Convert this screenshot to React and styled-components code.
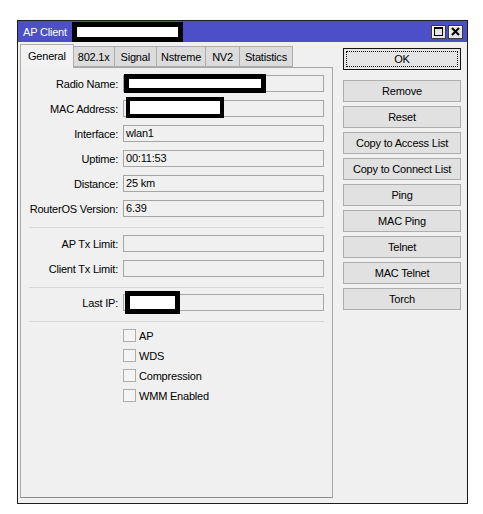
import React from 'react';
import styled, { createGlobalStyle } from 'styled-components';

const GlobalStyle = createGlobalStyle`
  body {
    margin: 0;
    background: #ffffff;
    font-family: "Liberation Sans", Arial, sans-serif;
    font-size: 11px;
    letter-spacing: -0.2px;
    color: #000;
  }
`

const Page = styled.div`
  padding: 20px 0 0 17px;
`

const Window = styled.div`
  width: 451px;
  height: 484px;
  box-sizing: border-box;
  border: 1px solid #1c1c1c;
  background: #f0f0f0;
  display: flex;
  flex-direction: column;
`

const TitleBar = styled.div`
  height: 21px;
  flex-shrink: 0;
  display: flex;
  align-items: center;
  padding: 0 4px 0 5px;
  background: #4c4fc8;
  color: #fff;
  font-size: 11px;
`

const TitleRedact = styled.span`
  display: inline-block;
  width: 111px;
  height: 20px;
  box-sizing: border-box;
  border: 5px solid #000;
  background: #fff;
  margin-left: 5px;
  align-self: flex-end;
`

const TitleButtons = styled.div`
  display: flex;
  gap: 2px;
  margin-left: auto;
`

const TitleButton = styled.div`
  width: 15px;
  height: 14px;
  box-sizing: border-box;
  border: 1px solid #3a3a3a;
  box-shadow: inset 1px 1px 0 #ffffff;
  background: #e6e6e6;
  display: flex;
  align-items: center;
  justify-content: center;
`

const Body = styled.div`
  flex: 1;
  display: flex;
  padding: 1px 0 5px 2px;
  min-height: 0;
`

const TabArea = styled.div`
  width: 313px;
  display: flex;
  flex-direction: column;
`

const TabStrip = styled.div`
  height: 24px;
  flex-shrink: 0;
  display: flex;
  align-items: flex-end;
`

const Tab = styled.div`
  position: relative;
  z-index: ${p => (p.$active ? 1 : 0)};
  height: ${p => (p.$active ? '24px' : '21px')};
  margin-bottom: ${p => (p.$active ? '-1px' : '0')};
  box-sizing: border-box;
  padding: 0 ${p => p.$pad}px;
  display: flex;
  align-items: center;
  border: 1px solid #adadad;
  border-bottom: ${p => (p.$active ? 'none' : '1px solid #adadad')};
  margin-left: ${p => (p.$first ? '0' : '-1px')};
  background: ${p => (p.$active ? '#f2f2f2' : '#dcdcdc')};
  padding-bottom: ${p => (p.$active ? '2px' : '0')};
  white-space: nowrap;
`

const Panel = styled.div`
  flex: 1;
  box-sizing: border-box;
  border: 1px solid #a8a8a8;
  border-bottom-color: #8c8c8c;
  background: #f0f0f0;
  padding-top: 7px;
`

const FormGrid = styled.div`
  display: grid;
  grid-template-columns: 97px 201px;
  column-gap: 5px;
  row-gap: 8px;
  align-items: center;
`

const Label = styled.div`
  text-align: right;
  white-space: nowrap;
`

const Field = styled.div`
  position: relative;
  height: 17px;
  box-sizing: border-box;
  border: 1px solid #a6a6a6;
  background: #f0f0f0;
  padding-left: 2px;
  line-height: 15px;
`

// black-framed blanking box laid over a field value
const Redact = styled.div`
  position: absolute;
  left: ${p => p.$left}px;
  top: ${p => p.$top}px;
  width: ${p => p.$w}px;
  height: ${p => p.$h}px;
  box-sizing: border-box;
  border: ${p => p.$edge || 5}px solid #000;
  background: #fff;
`

const Separator = styled.div`
  height: 1px;
  background: #d8d8d8;
  margin: ${p => p.$top || 10}px 8px ${p => p.$bottom || 7}px;
`

const CheckList = styled.div`
  display: flex;
  flex-direction: column;
  gap: 7px;
  padding-left: 102px;
`

const CheckRow = styled.div`
  display: flex;
  align-items: center;
  gap: 3px;
  height: 13px;
`

const CheckBox = styled.span`
  width: 13px;
  height: 13px;
  box-sizing: border-box;
  border: 1px solid #adadad;
  background: #f4f4f4;
`

const ButtonColumn = styled.div`
  width: 118px;
  margin-left: 10px;
  padding-top: 5px;
  display: flex;
  flex-direction: column;
  gap: 4px;
`

const Button = styled.div`
  position: relative;
  height: 22px;
  box-sizing: border-box;
  border: 1px solid ${p => (p.$default ? '#111' : '#adadad')};
  background: #e1e1e1;
  display: flex;
  align-items: center;
  justify-content: center;
  white-space: nowrap;
  margin-bottom: ${p => (p.$default ? '6px' : '0')};

  ${p => p.$default && `
    background: #e5e5e5;
    &::after {
      content: '';
      position: absolute;
      inset: 2px;
      border: 1px dotted #000;
    }
  `}
`

const MaxIcon = () => (
  <svg width="9" height="9" viewBox="0 0 9 9">
    <rect x="0.5" y="0.5" width="8" height="8" fill="none" stroke="#000" />
    <line x1="0" y1="1.5" x2="9" y2="1.5" stroke="#000" />
  </svg>
)

const CloseIcon = () => (
  <svg width="9" height="9" viewBox="0 0 9 9">
    <path d="M1 1 L8 8 M8 1 L1 8" stroke="#000" strokeWidth="2" />
  </svg>
)

const tabs = [
  { name: 'General', pad: 7 },
  { name: '802.1x', pad: 4 },
  { name: 'Signal', pad: 6 },
  { name: 'Nstreme', pad: 4 },
  { name: 'NV2', pad: 6 },
  { name: 'Statistics', pad: 5 },
]

const buttons = ['Remove', 'Reset', 'Copy to Access List', 'Copy to Connect List', 'Ping', 'MAC Ping', 'Telnet', 'MAC Telnet', 'Torch']

const checks = ['AP', 'WDS', 'Compression', 'WMM Enabled']

const App = () => {
  return (
    <Page>
      <GlobalStyle />
      <Window>
        <TitleBar>
          AP Client
          <TitleRedact />
          <TitleButtons>
            <TitleButton><MaxIcon /></TitleButton>
            <TitleButton><CloseIcon /></TitleButton>
          </TitleButtons>
        </TitleBar>

        <Body>
          <TabArea>
            <TabStrip>
              {tabs.map((t, i) => (
                <Tab key={t.name} $active={i === 0} $first={i === 0} $pad={t.pad}>{t.name}</Tab>
              ))}
            </TabStrip>

            <Panel>
              <FormGrid>
                <Label>Radio Name:</Label>
                <Field><Redact $left={0} $top={-2} $w={142} $h={19} /></Field>
                <Label>MAC Address:</Label>
                <Field><Redact $left={2} $top={-4} $w={98} $h={21} $edge={4} /></Field>
                <Label>Interface:</Label>
                <Field>wlan1</Field>
                <Label>Uptime:</Label>
                <Field>00:11:53</Field>
                <Label>Distance:</Label>
                <Field>25 km</Field>
                <Label>RouterOS Version:</Label>
                <Field>6.39</Field>
              </FormGrid>

              <Separator />

              <FormGrid>
                <Label>AP Tx Limit:</Label>
                <Field />
                <Label>Client Tx Limit:</Label>
                <Field />
              </FormGrid>

              <Separator $top={10} $bottom={6} />

              <FormGrid>
                <Label>Last IP:</Label>
                <Field><Redact $left={1} $top={-4} $w={55} $h={23} /></Field>
              </FormGrid>

              <Separator $top={10} $bottom={7} />

              <CheckList>
                {checks.map(c => (
                  <CheckRow key={c}>
                    <CheckBox />
                    {c}
                  </CheckRow>
                ))}
              </CheckList>
            </Panel>
          </TabArea>

          <ButtonColumn>
            <Button $default>OK</Button>
            {buttons.map(b => (
              <Button key={b}>{b}</Button>
            ))}
          </ButtonColumn>
        </Body>
      </Window>
    </Page>
  );
}

export default App;
